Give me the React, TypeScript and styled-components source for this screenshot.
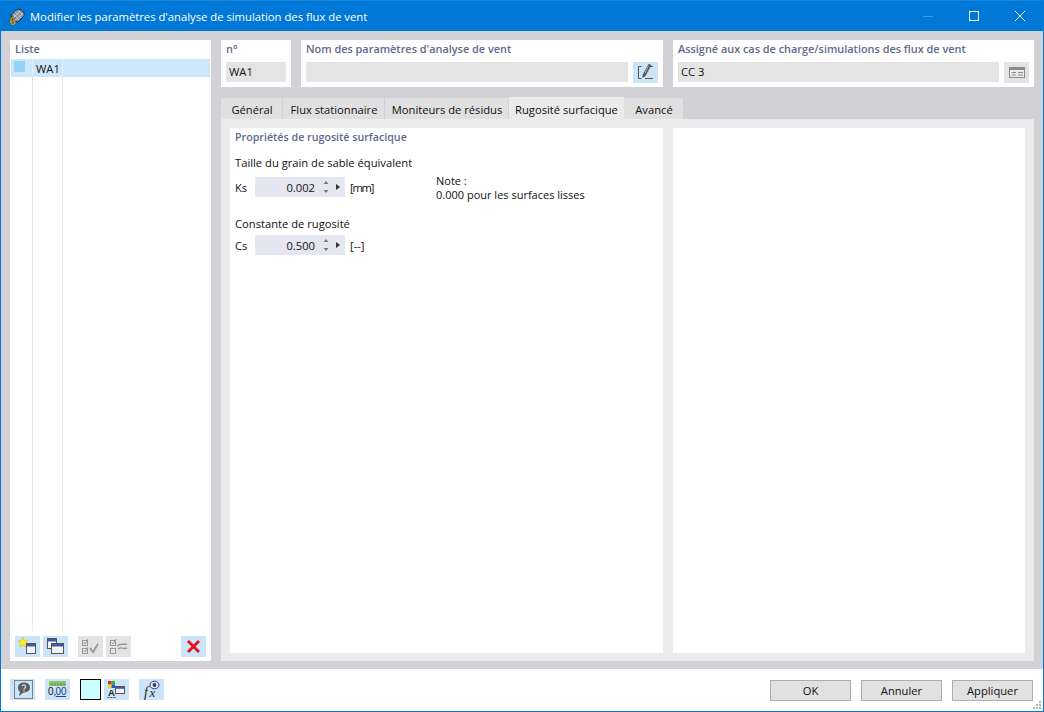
import React from "react";
import styled, { createGlobalStyle } from "styled-components";

const Global = createGlobalStyle`
  html, body { margin: 0; padding: 0; background: #fff; }
  * { box-sizing: border-box; }
  body { font-family: "Open Sans", "Noto Sans", sans-serif; font-size: 11.2px; color: #111; }
`;

const Win = styled.div`
  width: 1044px;
  height: 712px;
  display: flex;
  flex-direction: column;
  border: 1px solid #0078d7;
  border-top: 0;
  background: #fff;
`;

const TitleBar = styled.div`
  height: 31px;
  flex: none;
  background: #0078d7;
  border-top: 1px solid #1a86dc;
  color: #fff;
  display: flex;
  align-items: center;
  padding-left: 7px;
  font-size: 11.25px;
`;

const TitleText = styled.span`
  margin-left: 5px;
  flex: 1;
`;

const WinBtn = styled.div`
  width: 46px;
  height: 30px;
  display: flex;
  align-items: center;
  justify-content: center;
`;

const Body = styled.div`
  flex: 1;
  background: #d2d1d5;
  padding: 9px 9px 8px;
  display: flex;
  gap: 10px;
  min-height: 0;
`;

const ListPanel = styled.div`
  width: 201px;
  background: #fff;
  display: flex;
  flex-direction: column;
`;

const Heading = styled.div`
  font-weight: 600;
  color: #5f6a8c;
  font-size: 10.9px;
  line-height: 15px;
`;

const ListHead = styled(Heading)`
  padding: 1px 5px 0;
  height: 19px;
`;

const ListRow = styled.div`
  margin: 0 1px;
  height: 18px;
  background: #cce6fc;
  display: flex;
  align-items: center;
  position: relative;
`;

const RowGuide = styled.i<{ $x: number }>`
  position: absolute;
  top: 0;
  bottom: 0;
  left: ${(p) => p.$x}px;
  width: 1px;
  background: #e6eef6;
`;

const Swatch = styled.div`
  width: 11px;
  height: 11px;
  margin-left: 3px;
  margin-top: -3px;
  background: #93d5f7;
`;

const RowLabel = styled.span`
  margin-left: 11px;
`;

const ListBody = styled.div`
  flex: 1;
  display: flex;
  padding-left: 22px;
`;

const Guide = styled.div<{ $w: number }>`
  width: ${(p) => p.$w}px;
  border-left: 1px solid #e8e8e8;
`;

const ListTools = styled.div`
  height: 30px;
  flex: none;
  display: flex;
  padding: 5px 5px 0;
  align-items: flex-start;
  gap: 3px;
`;

const IconBtn = styled.div<{ $off?: boolean }>`
  width: 25px;
  height: 21px;
  background: ${(p) => (p.$off ? "#e3e3e3" : "#cce4f7")};
  flex: none;
  svg { display: block; }
`;

const Gap = styled.div<{ $w: number }>`
  width: ${(p) => p.$w}px;
  flex: none;
`;

const Main = styled.div`
  flex: 1;
  display: flex;
  flex-direction: column;
  min-width: 0;
`;

const TopRow = styled.div`
  display: flex;
  gap: 10px;
  height: 47px;
  flex: none;
`;

const Card = styled.div<{ $w: number }>`
  width: ${(p) => p.$w}px;
  background: #fff;
  padding: 1px 5px 0;
  flex: none;
`;

const FieldRow = styled.div`
  margin-top: 6px;
  display: flex;
  justify-content: space-between;
`;

const Field = styled.div<{ $w: number }>`
  width: ${(p) => p.$w}px;
  height: 20px;
  background: #e4e4e4;
  line-height: 20px;
  padding-left: 3px;
`;

const Tabs = styled.div`
  margin-top: 10px;
  height: 22px;
  flex: none;
  display: flex;
  align-items: flex-end;
`;

const Tab = styled.div<{ $active?: boolean; $w: number }>`
  width: ${(p) => p.$w}px;
  height: ${(p) => (p.$active ? 22 : 21)}px;
  background: ${(p) => (p.$active ? "#ebebeb" : "#e0e0e0")};
  border-right: 1px solid ${(p) => (p.$active ? "#ebebeb" : "#d2d1d5")};
  padding: ${(p) => (p.$active ? 2 : 1)}px 0 0 1px;
  display: flex;
  align-items: center;
  justify-content: center;
  white-space: nowrap;
`;

const TabBody = styled.div`
  flex: 1;
  background: #ebebeb;
  padding: 9px 9px 8px;
  display: flex;
  gap: 10px;
  min-height: 0;
`;

const LeftPane = styled.div`
  width: 433px;
  background: #fff;
  padding: 2px 5px;
`;

const RightPane = styled.div`
  flex: 1;
  background: #fff;
`;

const PaneHeading = styled(Heading)`
  font-size: 10.7px;
`;

const Label = styled.div<{ $top: number }>`
  margin-top: ${(p) => p.$top}px;
  line-height: 15px;
`;

const SpinRow = styled.div<{ $top: number }>`
  margin-top: ${(p) => p.$top}px;
  display: flex;
  align-items: center;
  height: 20px;
`;

const Sym = styled.span`
  width: 20px;
`;

const Spin = styled.div`
  width: 90px;
  height: 20px;
  background: #e6e6f2;
  display: flex;
  align-items: center;
`;

const Val = styled.span`
  width: 60px;
  text-align: right;
`;

const Arrows = styled.svg`
  margin-left: 8px;
  flex: none;
`;

const Unit = styled.span<{ $tight?: boolean }>`
  margin-left: 5px;
  width: 24px;
  white-space: nowrap;
  letter-spacing: ${(p) => (p.$tight ? "-1.2px" : "0")};
`;

const Note = styled.div`
  margin-left: 62px;
  margin-top: 1px;
  line-height: 14px;
  font-size: 11px;
`;

const Footer = styled.div`
  height: 42px;
  flex: none;
  background: #fff;
  display: flex;
  align-items: flex-start;
  padding: 10px 10px 0 9px;
  position: relative;
`;

const ColorBox = styled.div`
  width: 21px;
  height: 21px;
  background: #ccffff;
  border: 1px solid #000;
  flex: none;
`;

const Grow = styled.div`
  flex: 1;
`;

const DlgBtn = styled.div`
  width: 81px;
  height: 21px;
  margin: 1px 0 0 10px;
  background: #e1e1e1;
  border: 1px solid #adadad;
  display: flex;
  align-items: center;
  justify-content: center;
`;

const Grip = styled.svg`
  position: absolute;
  right: 1px;
  bottom: 1px;
`;

// small dialog window used by the "new" and "copy" list buttons
const WindowGlyph = ({ x, y, w, h }: { x: number; y: number; w: number; h: number }) => (
  <>
    <rect x={x + 0.5} y={y + 0.5} width={w - 1} height={h - 1} fill="#f4f4f4" stroke="#555" />
    <rect x={x + 1} y={y + 1} width={w - 2} height={2.5} fill="#3d5aa8" />
  </>
);

const Stepper = () => (
  <Arrows width="20" height="14" viewBox="0 0 20 14">
    <path d="M3 1 L5.5 4 H0.5 Z M3 13 L0.5 10 H5.5 Z" fill="#777" />
    <path d="M13 4 L17 7 L13 10 Z" fill="#333" />
  </Arrows>
);

export default function App() {
  return (
    <>
      <Global />
      <Win>
        <TitleBar>
          <svg width="17" height="17" viewBox="0 0 17 17">
            <path d="M3 7 L9 1.5 C11.5 0.5 15 2 16 5 C16.5 7 16 8 15 9 L10 14 L5 13 Z" fill="#7f889c" stroke="#23272f" strokeWidth="0.9" />
            <path d="M5 5.5 L11 12 M7 3.5 L13 10 M9.5 2 L15 7.5 M5 10 L12 3 M7 12.5 L15 5" stroke="#dfe4ee" strokeWidth="0.7" />
            <text x="1.5" y="16.5" fontSize="11" fontWeight="700" fontFamily="Liberation Sans" fill="#f7b90f" stroke="#3a2c00" strokeWidth="0.3">6</text>
          </svg>
          <TitleText>Modifier les paramètres d'analyse de simulation des flux de vent</TitleText>
          <WinBtn>
            <svg width="10" height="10"><path d="M0 5.5 H10" stroke="#4a9be0" /></svg>
          </WinBtn>
          <WinBtn>
            <svg width="10" height="10"><rect x="0.5" y="0.5" width="9" height="9" fill="none" stroke="#fff" /></svg>
          </WinBtn>
          <WinBtn>
            <svg width="10" height="10"><path d="M0 0 L10 10 M10 0 L0 10" stroke="#fff" /></svg>
          </WinBtn>
        </TitleBar>
        <Body>
          <ListPanel>
            <ListHead>Liste</ListHead>
            <ListRow>
              <RowGuide $x={21} />
              <RowGuide $x={51} />
              <Swatch />
              <RowLabel>WA1</RowLabel>
            </ListRow>
            <ListBody>
              <Guide $w={30} />
              <Guide $w={1} />
            </ListBody>
            <ListTools>
              <IconBtn>
                <svg width="25" height="21" viewBox="0 0 25 21">
                  <WindowGlyph x={11} y={7} w={10} h={11} />
                  <path d="M8 1 L9.5 4.5 L13 5 L10.5 7.3 L11 11 L8 9 L5 11 L5.5 7.3 L3 5 L6.5 4.5 Z" fill="#f7ef2e" stroke="#c9b400" strokeWidth="0.5" />
                </svg>
              </IconBtn>
              <IconBtn>
                <svg width="25" height="21" viewBox="0 0 25 21">
                  <WindowGlyph x={4} y={2} w={10} h={11} />
                  <WindowGlyph x={8} y={7} w={13} h={11} />
                </svg>
              </IconBtn>
              <Gap $w={4} />
              <IconBtn $off>
                <svg width="25" height="21" viewBox="0 0 25 21" fill="none" stroke="#9a9a9a">
                  <rect x="4.5" y="4.5" width="5" height="5" />
                  <rect x="4.5" y="12.5" width="5" height="5" />
                  <path d="M5.5 6.5 L7 8 L10 3 M5.5 14.5 L7 16 L10 11" />
                  <path d="M12 12 L15 16 L20 8" strokeWidth="2" />
                </svg>
              </IconBtn>
              <IconBtn $off>
                <svg width="25" height="21" viewBox="0 0 25 21" fill="none" stroke="#9a9a9a">
                  <rect x="4.5" y="4.5" width="5" height="5" />
                  <rect x="4.5" y="12.5" width="5" height="5" />
                  <path d="M5.5 6.5 L7 8 L10 3" />
                  <path d="M11 10 C14 7 17 9 21 8 M12 13 C15 10 17 14 21 12" strokeWidth="1.4" />
                </svg>
              </IconBtn>
              <Gap $w={44} />
              <IconBtn>
                <svg width="25" height="21" viewBox="0 0 25 21">
                  <path d="M7 5 L18 16 M18 5 L7 16" stroke="#e8141c" strokeWidth="3" />
                </svg>
              </IconBtn>
            </ListTools>
          </ListPanel>
          <Main>
            <TopRow>
              <Card $w={70}>
                <Heading>n°</Heading>
                <FieldRow><Field $w={60}>WA1</Field></FieldRow>
              </Card>
              <Card $w={362}>
                <Heading>Nom des paramètres d'analyse de vent</Heading>
                <FieldRow>
                  <Field $w={322} />
                  <IconBtn>
                    <svg width="25" height="21" viewBox="0 0 25 21" fill="none">
                      <path d="M8.5 4.5 H5.5 V16.5 H8.5 M12 16.5 H20 M17 4.5 H20" stroke="#555" />
                      <path d="M15.5 2 L18.5 3 L12.5 14 L9.5 16 L9.5 13 Z" fill="#5a5a5a" />
                      <path d="M15.5 4 L12 11" stroke="#a8a8a8" />
                    </svg>
                  </IconBtn>
                </FieldRow>
              </Card>
              <Card $w={361}>
                <Heading>Assigné aux cas de charge/simulations des flux de vent</Heading>
                <FieldRow>
                  <Field $w={321}>CC 3</Field>
                  <IconBtn $off>
                    <svg width="25" height="21" viewBox="0 0 25 21" fill="none" stroke="#8a8a8a">
                      <rect x="5.5" y="5.5" width="15" height="10" fill="#ececec" />
                      <path d="M5.5 7 H20.5" strokeWidth="2" />
                      <path d="M7.5 10.5 H12 M14 10.5 H19 M7.5 13 H12 M14 13 H19" />
                    </svg>
                  </IconBtn>
                </FieldRow>
              </Card>
            </TopRow>
            <Tabs>
              <Tab $w={62}>Général</Tab>
              <Tab $w={102}>Flux stationnaire</Tab>
              <Tab $w={124}>Moniteurs de résidus</Tab>
              <Tab $w={115} $active>Rugosité surfacique</Tab>
              <Tab $w={60}>Avancé</Tab>
            </Tabs>
            <TabBody>
              <LeftPane>
                <PaneHeading>Propriétés de rugosité surfacique</PaneHeading>
                <Label $top={10}>Taille du grain de sable équivalent</Label>
                <SpinRow $top={7}>
                  <Sym>Ks</Sym>
                  <Spin>
                    <Val>0.002</Val>
                    <Stepper />
                  </Spin>
                  <Unit $tight>[mm]</Unit>
                  <Note>Note :<br />0.000 pour les surfaces lisses</Note>
                </SpinRow>
                <Label $top={19}>Constante de rugosité</Label>
                <SpinRow $top={4}>
                  <Sym>Cs</Sym>
                  <Spin>
                    <Val>0.500</Val>
                    <Stepper />
                  </Spin>
                  <Unit>[--]</Unit>
                </SpinRow>
              </LeftPane>
              <RightPane />
            </TabBody>
          </Main>
        </Body>
        <Footer>
          <IconBtn>
            <svg width="25" height="21" viewBox="0 0 25 21" fill="none">
              <rect x="4.5" y="1.5" width="18" height="18" stroke="#222" strokeDasharray="1 1" />
              <path d="M14 3.5 C18.5 3.5 20 6 20 8.5 C20 11.5 17 13.5 13.5 13.5 L9 17 L10 13 C8.5 12 8 10 8 8.5 C8 5.5 10.5 3.5 14 3.5 Z" fill="#5e5e5e" />
              <path d="M12 7 C13 5.5 16 6 15.5 8 C15 9.5 14 9 14 10.5 M14 11.2 V12.4" stroke="#cce4f7" strokeWidth="1.2" />
            </svg>
          </IconBtn>
          <Gap $w={10} />
          <IconBtn>
            <svg width="25" height="21" viewBox="0 0 25 21" fill="none">
              <rect x="4" y="2" width="17" height="5" fill="#8fc06a" />
              <path d="M7 4 V7 M10 4 V7 M13 4 V7 M16 4 V7 M19 4 V7" stroke="#5f9a3f" />
              <path d="M11 17.5 H21" stroke="#2b3f8c" />
              <text x="3" y="16" fontSize="10" fontFamily="Liberation Sans" fill="#111">0,</text>
              <text x="10.5" y="16" fontSize="10" fontFamily="Liberation Sans" fill="#2b3f8c">00</text>
            </svg>
          </IconBtn>
          <Gap $w={10} />
          <ColorBox />
          <Gap $w={3} />
          <IconBtn>
            <svg width="25" height="21" viewBox="0 0 25 21" fill="none">
              <rect x="4" y="2" width="3.5" height="3.5" fill="#e52020" />
              <rect x="7.5" y="2" width="3.5" height="3.5" fill="#2db52d" />
              <rect x="4" y="5.5" width="3.5" height="3.5" fill="#e8d81e" />
              <rect x="7.5" y="5.5" width="3.5" height="3.5" fill="#2e4fd6" />
              <rect x="11.5" y="7.5" width="9" height="7" fill="#f4f4f4" stroke="#555" />
              <rect x="12" y="8" width="8" height="1.8" fill="#3d5aa8" />
              <text x="4" y="16.5" fontSize="9.5" fontFamily="Liberation Sans" fontWeight="700" fill="#222">A</text>
              <path d="M3.5 18.5 H12" stroke="#444" strokeDasharray="2 1" />
            </svg>
          </IconBtn>
          <Gap $w={10} />
          <IconBtn>
            <svg width="25" height="21" viewBox="0 0 25 21" fill="none">
              <text x="5" y="18" fontSize="14" fontStyle="italic" fontFamily="Liberation Serif" fill="#222">f</text>
              <text x="10.5" y="18" fontSize="13" fontStyle="italic" fontFamily="Liberation Serif" fill="#222">x</text>
              <ellipse cx="15.5" cy="6" rx="4.5" ry="3.8" fill="#dfe4f2" stroke="#333a80" />
              <circle cx="15.5" cy="6" r="1.9" fill="#333a80" />
            </svg>
          </IconBtn>
          <Grow />
          <DlgBtn>OK</DlgBtn>
          <DlgBtn>Annuler</DlgBtn>
          <DlgBtn>Appliquer</DlgBtn>
          <Grip width="10" height="10" viewBox="0 0 10 10">
            <path d="M7 1 h2 v2 h-2 Z M4 4 h2 v2 h-2 Z M7 4 h2 v2 h-2 Z M1 7 h2 v2 h-2 Z M4 7 h2 v2 h-2 Z M7 7 h2 v2 h-2 Z" fill="#b5b5b5" />
          </Grip>
        </Footer>
      </Win>
    </>
  );
}
